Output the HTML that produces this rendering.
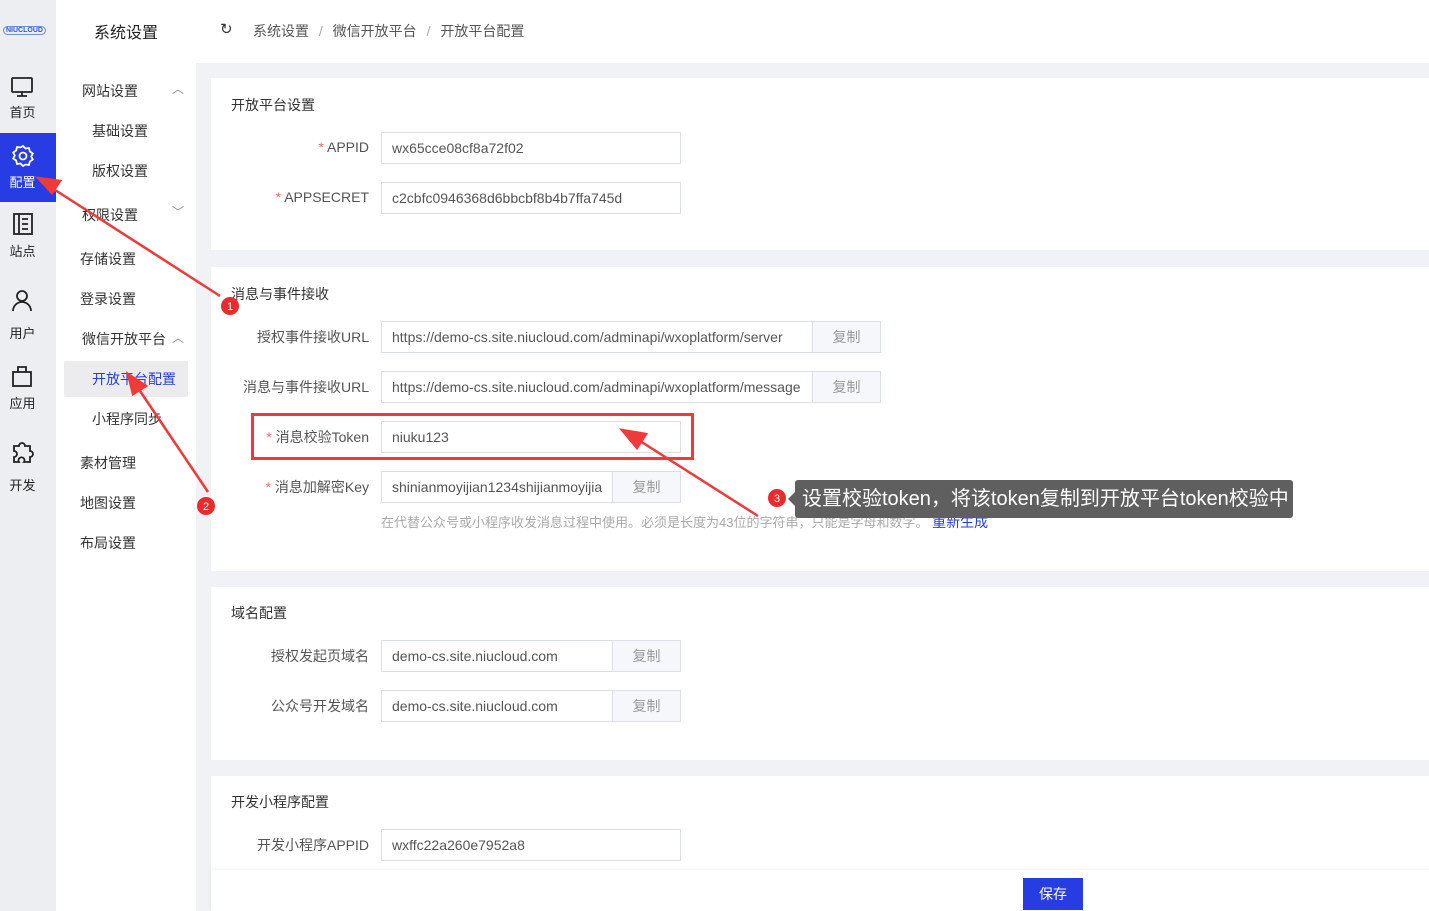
<!DOCTYPE html>
<html><head><meta charset="utf-8"><style>
*{margin:0;padding:0;box-sizing:border-box}
body{width:1429px;height:911px;overflow:hidden;position:relative;background:#f0f2f5;font-family:"Liberation Sans","Noto Sans CJK SC",sans-serif;font-size:14px;color:#333}
.abs{position:absolute}
.bar{left:0;top:0;width:56px;height:911px;background:#eceef1}
.ic{position:absolute;left:0;width:45px;text-align:center;font-size:13px;color:#222}
.side{left:56px;top:0;width:140px;height:911px;background:#fff}
.top{left:196px;top:0;width:1233px;height:63px;background:#fff}
.card{position:absolute;left:211px;width:1218px;background:#fff}
.m{position:absolute;font-size:14px;color:#333}
.lbl{position:absolute;width:160px;text-align:right;font-size:14px;color:#555;left:209px}
.lbl i{color:#f56c6c;font-style:normal}
.inp{position:absolute;left:381px;height:32px;border:1px solid #dcdfe6;background:#fff;padding-left:10px;line-height:30px;font-size:14px;color:#555;overflow:hidden;white-space:nowrap}
.cp{position:absolute;height:32px;border:1px solid #dcdfe6;background:#f5f7fa;color:#999;text-align:center;line-height:30px;font-size:14px}
.ct{position:absolute;left:231px;font-size:14px;color:#333}
</style></head><body>
<div class="abs bar"></div>
<div class="abs" style="left:3px;top:26px;font-size:7px;font-weight:bold;color:#2a5ad8;border:1px solid #6a8de8;border-radius:6px;padding:0 2px">NIUCLOUD</div>
<div class="abs" style="left:0;top:133px;width:56px;height:69px;background:#273de3"></div>
<svg class="abs" style="left:10px;top:75px" width="24" height="24" viewBox="0 0 24 24" fill="none" stroke="#222" stroke-width="1.8"><rect x="2" y="3" width="20" height="14" rx="1"/><path d="M12 17v4M7 21h10"/></svg>
<div class="ic" style="top:102px">首页</div>
<svg class="abs" style="left:11px;top:144px" width="24" height="24" viewBox="0 0 24 24" fill="none" stroke="#fff" stroke-width="1.8"><circle cx="12" cy="12" r="3.5"/><path d="M12 2l2.5 2.5 3.5-.5.8 3.4 3 2.1-1.6 3 1.6 3-3 2.1-.8 3.4-3.5-.5L12 22l-2.5-2.5-3.5.5-.8-3.4-3-2.1 1.6-3-1.6-3 3-2.1.8-3.4 3.5.5z"/></svg>
<div class="ic" style="top:172px;color:#fff">配置</div>
<svg class="abs" style="left:12px;top:212px" width="22" height="24" viewBox="0 0 22 24" fill="none" stroke="#222" stroke-width="1.8"><rect x="2" y="2" width="18" height="20"/><path d="M7 2v20M10 7h6M10 12h6M10 17h6"/></svg>
<div class="ic" style="top:241px">站点</div>
<svg class="abs" style="left:10px;top:288px" width="24" height="24" viewBox="0 0 24 24" fill="none" stroke="#222" stroke-width="1.8"><circle cx="12" cy="8" r="5"/><path d="M3 23c0-5 4-9 9-9s9 4 9 9"/></svg>
<div class="ic" style="top:323px">用户</div>
<svg class="abs" style="left:11px;top:364px" width="22" height="24" viewBox="0 0 22 24" fill="none" stroke="#222" stroke-width="1.8"><rect x="2" y="8" width="18" height="14"/><path d="M7 8V3h8v5"/></svg>
<div class="ic" style="top:393px">应用</div>
<svg class="abs" style="left:10px;top:438px" width="26" height="26" viewBox="0 0 26 26" fill="none" stroke="#222" stroke-width="1.8"><path d="M4 8h5a3 3 0 1 1 6 0h5v5a3 3 0 1 1 0 6v5h-6a3 3 0 1 0-5 0H4v-5a3 3 0 1 0 0-6z"/></svg>
<div class="ic" style="top:475px">开发</div>

<div class="abs side"></div>
<div class="m" style="left:94px;top:19px;font-size:16px;color:#222">系统设置</div>
<div class="m" style="left:82px;top:81px">网站设置</div><div class="m" style="left:172px;top:80px;color:#888;font-size:12px">︿</div>
<div class="m" style="left:92px;top:121px">基础设置</div>
<div class="m" style="left:92px;top:161px">版权设置</div>
<div class="m" style="left:82px;top:205px">权限设置</div><div class="m" style="left:172px;top:203px;color:#888;font-size:12px">﹀</div>
<div class="m" style="left:80px;top:249px">存储设置</div>
<div class="m" style="left:80px;top:289px">登录设置</div>
<div class="m" style="left:82px;top:329px">微信开放平台</div><div class="m" style="left:172px;top:329px;color:#888;font-size:12px">︿</div>
<div class="abs" style="left:64px;top:361px;width:124px;height:36px;background:#ececef;border-radius:2px"></div>
<div class="m" style="left:92px;top:369px;color:#273de3">开放平台配置</div>
<div class="m" style="left:92px;top:409px">小程序同步</div>
<div class="m" style="left:80px;top:453px">素材管理</div>
<div class="m" style="left:80px;top:493px">地图设置</div>
<div class="m" style="left:80px;top:533px">布局设置</div>

<div class="abs top"></div>
<div class="m" style="left:220px;top:20px;font-size:15px">↻</div>
<div class="m" style="left:253px;top:21px;color:#555">系统设置 <span style="color:#aaa;margin:0 6px">/</span> 微信开放平台 <span style="color:#aaa;margin:0 6px">/</span> 开放平台配置</div>

<div class="card" style="top:78px;height:172px"></div>
<div class="card" style="top:267px;height:304px"></div>
<div class="card" style="top:587px;height:173px"></div>
<div class="card" style="top:776px;height:135px"></div>

<div class="ct" style="top:95px">开放平台设置</div>
<div class="lbl" style="top:139px"><i>* </i>APPID</div><div class="inp" style="top:132px;width:300px">wx65cce08cf8a72f02</div>
<div class="lbl" style="top:189px"><i>* </i>APPSECRET</div><div class="inp" style="top:182px;width:300px">c2cbfc0946368d6bbcbf8b4b7ffa745d</div>

<div class="ct" style="top:284px">消息与事件接收</div>
<div class="lbl" style="top:327px">授权事件接收URL</div><div class="inp" style="top:321px;width:432px">https://demo-cs.site.niucloud.com/adminapi/wxoplatform/server</div><div class="cp" style="left:812px;top:321px;width:69px">复制</div>
<div class="lbl" style="top:377px">消息与事件接收URL</div><div class="inp" style="top:371px;width:432px">https://demo-cs.site.niucloud.com/adminapi/wxoplatform/message</div><div class="cp" style="left:812px;top:371px;width:69px">复制</div>
<div class="lbl" style="top:427px"><i>* </i>消息校验Token</div><div class="inp" style="top:421px;width:300px">niuku123</div>
<div class="abs" style="left:251px;top:413px;width:443px;height:47px;border:3px solid #f03a3a"></div>
<div class="lbl" style="top:477px"><i>* </i>消息加解密Key</div><div class="inp" style="top:471px;width:232px">shinianmoyijian1234shijianmoyijia</div><div class="cp" style="left:612px;top:471px;width:69px">复制</div>
<div class="m" style="left:381px;top:512px;font-size:13px;color:#aaa">在代替公众号或小程序收发消息过程中使用。必须是长度为43位的字符串，只能是字母和数字。 <span style="color:#273de3;font-size:14px">重新生成</span></div>

<div class="ct" style="top:603px">域名配置</div>
<div class="lbl" style="top:646px">授权发起页域名</div><div class="inp" style="top:640px;width:232px">demo-cs.site.niucloud.com</div><div class="cp" style="left:612px;top:640px;width:69px">复制</div>
<div class="lbl" style="top:696px">公众号开发域名</div><div class="inp" style="top:690px;width:232px">demo-cs.site.niucloud.com</div><div class="cp" style="left:612px;top:690px;width:69px">复制</div>

<div class="ct" style="top:792px">开发小程序配置</div>
<div class="lbl" style="top:835px">开发小程序APPID</div><div class="inp" style="top:829px;width:300px">wxffc22a260e7952a8</div>

<div class="abs" style="left:211px;top:870px;width:1218px;height:41px;background:#fff;box-shadow:0 -1px 4px rgba(0,0,0,.06)"></div>
<div class="abs" style="left:1023px;top:878px;width:60px;height:32px;background:#273de3;color:#fff;text-align:center;line-height:32px;font-size:14px">保存</div>

<div class="abs" style="left:795px;top:480px;width:498px;height:38px;background:#5f5f5f;border-radius:3px;color:#fff;font-size:20px;line-height:38px;padding-left:7px;white-space:nowrap">设置校验token，将该token复制到开放平台token校验中</div>
<div class="abs" style="left:788px;top:492px;width:0;height:0;border:7px solid transparent;border-right-color:#5f5f5f;border-left:0"></div>

<svg class="abs" style="left:0;top:0" width="1429" height="911">
<g stroke="#f03a3a" stroke-width="2.5" fill="#f03a3a">
<line x1="220" y1="296" x2="52" y2="188"/><polygon points="38,178 60,181 52,193"/>
<line x1="208" y1="492" x2="138" y2="388"/><polygon points="128,374 146,386 133,394"/>
<line x1="758" y1="516" x2="640" y2="441"/><polygon points="622,430 646,434 637,448"/>
</g>
<g font-family="Liberation Sans" font-size="11" fill="#fff" text-anchor="middle">
<circle cx="230" cy="306" r="9" fill="#e82c2c"/><text x="230" y="310">1</text>
<circle cx="206" cy="506" r="9" fill="#e82c2c"/><text x="206" y="510">2</text>
<circle cx="777" cy="498" r="9" fill="#e82c2c"/><text x="777" y="502">3</text>
</g>
</svg>
</body></html>
